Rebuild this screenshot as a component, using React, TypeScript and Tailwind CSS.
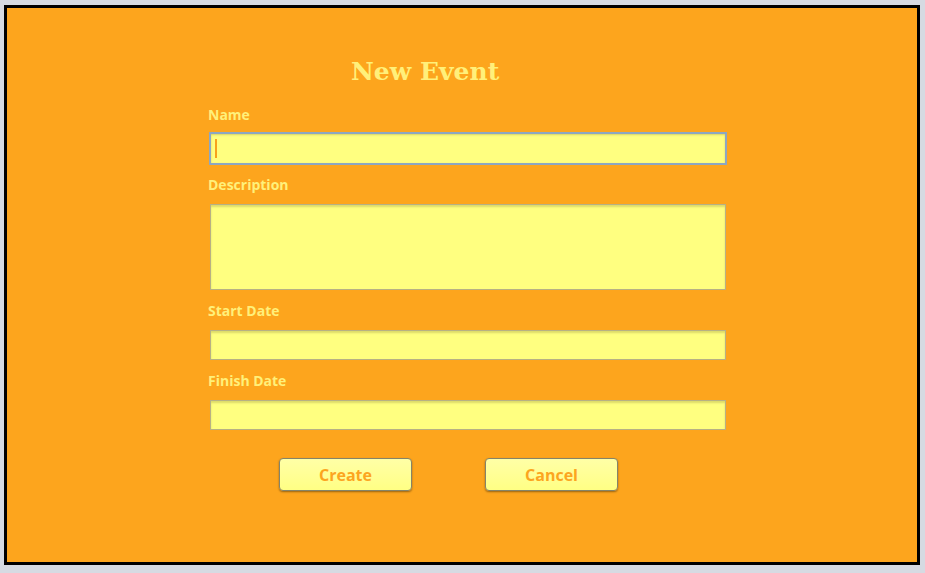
const labelCls =
  "h-5 text-[14px] font-bold leading-5 text-[#fff07a] [font-family:'Open_Sans',sans-serif]";
const boxCls =
  "block w-[516px] border border-[#b7b184] bg-[#ffff80] shadow-[inset_0_2px_2px_rgba(120,110,40,0.25)] outline-none";

function Btn({ children }: { children: string }) {
  return (
    <button className="h-[33px] w-[133px] rounded-[4px] border border-[#85846a] bg-gradient-to-b from-[#ffffa6] to-[#ffff84] text-[16px] font-bold text-[#fca51f] shadow-[0_1px_2px_rgba(0,0,0,0.4)] [font-family:'Open_Sans',sans-serif]">
      {children}
    </button>
  );
}

export default function App() {
  return (
    <div className="h-[573px] w-[925px] bg-[#d6dae2] pl-[4px] pt-[5px]">
      <div className="h-[560px] w-[916px] border-[3px] border-black bg-[#fda51d] pl-[201px] pt-[46px]">
        <h1 className="ml-[143px] h-9 text-[25px] font-bold leading-9 text-[#fff07a] [font-family:'DejaVu_Serif',serif]">
          New Event
        </h1>
        <div className="mt-[15px] flex flex-col">
          <div className={labelCls}>Name</div>
          <div className="relative ml-[1px] mt-[7px] h-[33px] w-[518px]">
            <input className="block h-full w-full border-2 border-[#8da7c2] bg-[#ffff80] shadow-[inset_0_1px_2px_rgba(120,110,40,0.3)] outline-none" />
            <span className="absolute left-[6px] top-[7px] h-[19px] w-[2px] bg-[#f7a21c]" />
          </div>

          <div className={`${labelCls} mt-[10px]`}>Description</div>
          <textarea className={`${boxCls} ml-[2px] mt-[9px] h-[86px] resize-none`} />

          <div className={`${labelCls} mt-[11px]`}>Start Date</div>
          <input className={`${boxCls} ml-[2px] mt-[9px] h-[30px]`} />

          <div className={`${labelCls} mt-[11px]`}>Finish Date</div>
          <input className={`${boxCls} ml-[2px] mt-[9px] h-[30px]`} />

          <div className="ml-[71px] mt-[28px] flex gap-[73px]">
            <Btn>Create</Btn>
            <Btn>Cancel</Btn>
          </div>
        </div>
      </div>
    </div>
  );
}
